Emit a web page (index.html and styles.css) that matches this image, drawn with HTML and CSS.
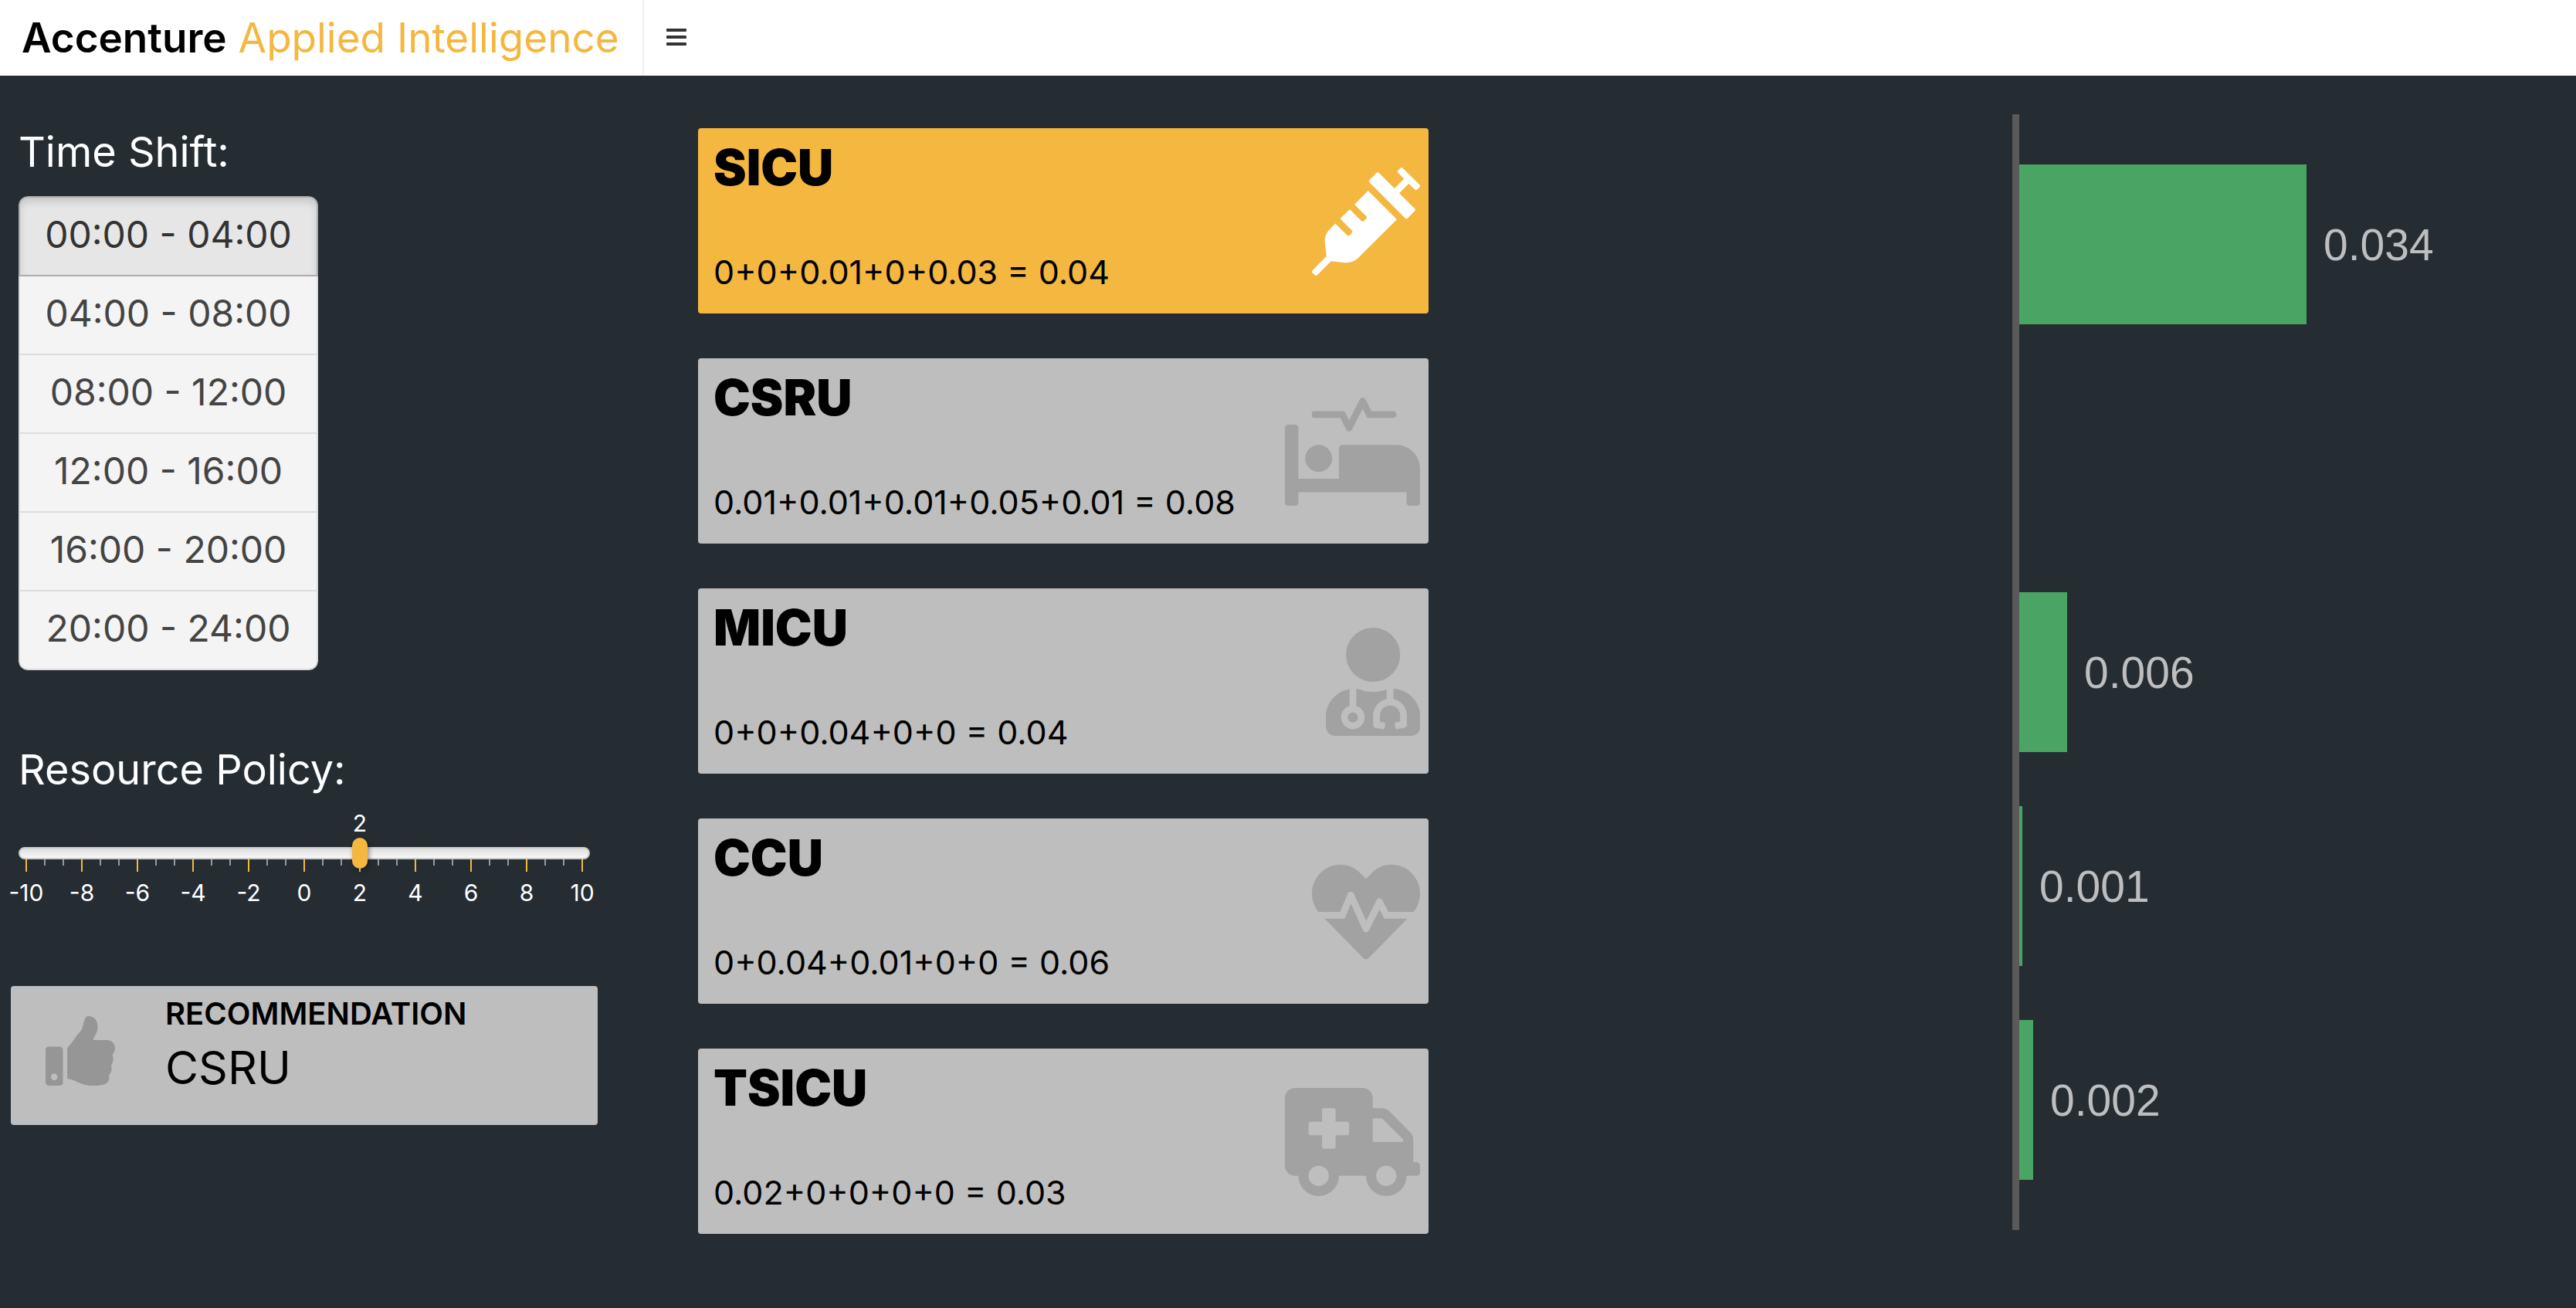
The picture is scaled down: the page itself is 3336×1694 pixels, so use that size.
FILE: index.html
```html
<!DOCTYPE html>
<html lang="en">
<head>
<meta charset="utf-8">
<title>Accenture Applied Intelligence</title>
<link rel="stylesheet" href="styles.css">
</head>
<body>
<header class="topbar">
  <a class="brand" href="#"><strong>Accenture</strong> Applied Intelligence</a>
  <button class="menu" type="button" aria-label="Toggle menu"><span></span><span></span><span></span></button>
</header>
<main class="dashboard">
  <section class="sidebar">
    <fieldset class="shifts">
      <legend class="heading">Time Shift:</legend>
      <div class="shift-list">
        <label class="shift"><input type="radio" name="shift" checked>00:00 - 04:00</label>
        <label class="shift"><input type="radio" name="shift">04:00 - 08:00</label>
        <label class="shift"><input type="radio" name="shift">08:00 - 12:00</label>
        <label class="shift"><input type="radio" name="shift">12:00 - 16:00</label>
        <label class="shift"><input type="radio" name="shift">16:00 - 20:00</label>
        <label class="shift"><input type="radio" name="shift">20:00 - 24:00</label>
      </div>
    </fieldset>
    <div class="policy">
      <label class="heading" for="policy">Resource Policy:</label>
      <div class="scale value"><output class="mark" for="policy" style="margin-left:60%">2</output></div>
      <input class="slider" id="policy" type="range" min="-10" max="10" value="2">
      <div class="scale ticks">
        <i></i><i></i><i></i><i></i><i></i><i></i><i></i><i></i><i></i><i></i><i></i><i></i><i></i><i></i><i></i><i></i><i></i><i></i><i></i><i></i><i></i><i></i><i></i><i></i><i></i><i></i><i></i><i></i><i></i><i></i><i></i>
      </div>
      <div class="scale labels">
        <span class="mark">-10</span><span class="mark">-8</span><span class="mark">-6</span><span class="mark">-4</span><span class="mark">-2</span><span class="mark">0</span><span class="mark">2</span><span class="mark">4</span><span class="mark">6</span><span class="mark">8</span><span class="mark">10</span>
      </div>
    </div>
    <div class="recommendation">
      <svg class="thumb" viewBox="0 0 512 512" aria-hidden="true"><path d="M104 224H24c-13.255 0-24 10.745-24 24v240c0 13.255 10.745 24 24 24h80c13.255 0 24-10.745 24-24V248c0-13.255-10.745-24-24-24zM64 472c-13.255 0-24-10.745-24-24s10.745-24 24-24 24 10.745 24 24-10.745 24-24 24zM384 81.452c0 42.416-25.97 66.208-33.277 94.548h101.723c33.397 0 59.397 27.746 59.553 58.098.084 17.938-7.546 37.249-19.439 49.197l-.11.11c9.836 23.337 8.237 56.037-9.308 79.469 8.681 25.895-.069 57.704-16.382 74.757 4.298 17.598 2.244 32.575-6.148 44.632C440.202 511.587 389.616 512 346.839 512l-2.845-.001c-48.287-.017-87.806-17.598-119.56-31.725-15.957-7.099-36.821-15.887-52.651-16.178-6.54-.12-11.783-5.457-11.783-11.998v-213.77c0-3.2 1.282-6.271 3.558-8.521 39.614-39.144 56.648-80.587 89.117-113.111 14.804-14.832 20.188-37.236 25.393-58.902C282.515 39.293 291.817 0 312 0c24 0 72 8 72 81.452z"/></svg>
      <div>
        <h2 class="rec-title">RECOMMENDATION</h2>
        <p class="rec-unit">CSRU</p>
      </div>
    </div>
  </section>

  <section class="units">
    <article class="unit selected">
      <div class="unit-text"><h2>SICU</h2><p>0+0+0.01+0+0.03 = 0.04</p></div>
      <svg class="icon" viewBox="0 0 512 512" aria-hidden="true"><path d="M201.500 174.800l55.700 55.800c3.100 3.100 3.100 8.200 0 11.300l-11.300 11.300c-3.100 3.100-8.200 3.100-11.300 0l-55.700-55.800-45.300 45.300 55.800 55.800c3.100 3.100 3.100 8.200 0 11.300l-11.300 11.300c-3.100 3.100-8.200 3.100-11.300 0L111 265.200l-26.400 26.400c-17.300 17.300-25.600 41.100-23 65.400l7.100 63.600L2.300 487c-3.100 3.100-3.100 8.200 0 11.300l11.300 11.300c3.100 3.100 8.200 3.100 11.300 0l66.300-66.300 63.600 7.100c23.900 2.600 47.900-5.400 65.400-23l181.900-181.900-135.700-135.700-64.900 65zm308.200-93.300L430.500 2.300c-3.100-3.100-8.200-3.100-11.300 0l-11.300 11.300c-3.100 3.100-3.100 8.200 0 11.300l28.300 28.300-45.300 45.300-56.600-56.600-17-17c-3.100-3.100-8.200-3.100-11.300 0l-33.900 33.900c-3.100 3.100-3.100 8.200 0 11.300l17 17L424.800 223l17 17c3.100 3.100 8.200 3.100 11.300 0l33.900-34c3.100-3.100 3.100-8.200 0-11.300l-73.500-73.500 45.300-45.300 28.300 28.300c3.100 3.100 8.200 3.100 11.300 0l11.300-11.300c3.100-3.200 3.100-8.200 0-11.400z"/></svg>
    </article>
    <article class="unit">
      <div class="unit-text"><h2>CSRU</h2><p>0.01+0.01+0.01+0.05+0.01 = 0.08</p></div>
      <svg class="icon" viewBox="0 0 640 512" aria-hidden="true"><path d="M528 224H272c-8.800 0-16 7.200-16 16v144H64V144c0-8.800-7.200-16-16-16H16c-8.800 0-16 7.200-16 16v352c0 8.800 7.200 16 16 16h32c8.800 0 16-7.200 16-16v-48h512v48c0 8.800 7.200 16 16 16h32c8.800 0 16-7.200 16-16V336c0-61.900-50.100-112-112-112zM136 96h126.100l27.600 55.200c5.900 11.800 22.700 11.800 28.600 0L368 51.800 390.100 96H512c8.800 0 16-7.200 16-16s-7.200-16-16-16H409.900L382.300 8.800C376.400-3 359.600-3 353.700 8.800L304 108.200l-19.900-39.800c-1.400-2.700-4.100-4.400-7.200-4.400H136c-4.400 0-8 3.600-8 8v16c0 4.400 3.600 8 8 8zm24 256c35.300 0 64-28.700 64-64s-28.700-64-64-64-64 28.700-64 64 28.700 64 64 64z"/></svg>
    </article>
    <article class="unit">
      <div class="unit-text"><h2>MICU</h2><p>0+0+0.04+0+0 = 0.04</p></div>
      <svg class="icon" viewBox="0 0 448 512" aria-hidden="true"><path d="M224 256c70.700 0 128-57.300 128-128S294.700 0 224 0 96 57.300 96 128s57.300 128 128 128zM104 424c0 13.300 10.700 24 24 24s24-10.700 24-24-10.700-24-24-24-24 10.700-24 24zm216-135.400v49c36.500 7.400 64 39.800 64 78.400v41.700c0 7.600-5.400 14.200-12.900 15.700l-32.200 6.400c-4.300.9-8.500-1.900-9.400-6.300l-3.100-15.700c-.9-4.300 1.900-8.600 6.300-9.400l19.300-3.900V416c0-62.800-96-65.100-96 1.900v26.700l19.300 3.900c4.300.9 7.100 5.100 6.300 9.400l-3.100 15.700c-.9 4.300-5.100 7.100-9.400 6.300l-31.200-4.200c-7.900-1.100-13.800-7.800-13.800-15.900V416c0-38.600 27.500-70.900 64-78.400v-45.200c-2.200.7-4.400 1.100-6.600 1.900-18 6.300-37.300 9.800-57.400 9.800s-39.400-3.500-57.400-9.800c-7.400-2.600-14.900-4.200-22.600-5.200v81.600c23.100 6.900 40 28.100 40 53.400 0 30.900-25.100 56-56 56s-56-25.100-56-56c0-25.300 16.900-46.500 40-53.400v-80.400C48.500 301 0 355.800 0 422.400v44.800C0 491.900 20.100 512 44.800 512h358.400c24.700 0 44.800-20.100 44.800-44.800v-44.800c0-72-56.800-130.300-128-133.800z"/></svg>
    </article>
    <article class="unit">
      <div class="unit-text"><h2>CCU</h2><p>0+0.04+0.01+0+0 = 0.06</p></div>
      <svg class="icon" viewBox="0 0 512 512" aria-hidden="true"><path d="M320.200 243.800l-49.700 99.400c-6 12.100-23.400 11.700-28.900-.6l-56.900-126.300-30 71.700H60.600l182.500 186.500c7.100 7.300 18.600 7.300 25.700 0L451.400 288H342.300l-22.100-44.200zM473.700 73.900l-2.400-2.500c-51.500-52.600-135.800-52.600-187.400 0L256 100l-27.900-28.500c-51.500-52.700-135.900-52.700-187.400 0l-2.400 2.400C-10.400 123.700-12.500 203 31 256h102.400l35.900-86.200c5.400-12.900 23.600-13.100 29.200-.4l58.200 129.300 49-97.900c5.900-11.800 22.700-11.800 28.600 0l27.600 55.200H481c43.500-53 41.400-132.300-7.300-182.100z"/></svg>
    </article>
    <article class="unit">
      <div class="unit-text"><h2>TSICU</h2><p>0.02+0+0+0+0 = 0.03</p></div>
      <svg class="icon" viewBox="0 0 640 512" aria-hidden="true"><path d="M624 352h-16V243.900c0-12.700-5.100-24.900-14.100-33.900L494 110.100c-9-9-21.200-14.100-33.900-14.100H416V48c0-26.500-21.500-48-48-48H48C21.500 0 0 21.500 0 48v320c0 26.500 21.500 48 48 48h16c0 53 43 96 96 96s96-43 96-96h128c0 53 43 96 96 96s96-43 96-96h48c8.800 0 16-7.200 16-16v-32c0-8.800-7.200-16-16-16zM160 464c-26.500 0-48-21.500-48-48s21.500-48 48-48 48 21.500 48 48-21.500 48-48 48zm144-248c0 4.400-3.600 8-8 8h-56v56c0 4.400-3.600 8-8 8h-48c-4.400 0-8-3.600-8-8v-56h-56c-4.400 0-8-3.600-8-8v-48c0-4.400 3.600-8 8-8h56v-56c0-4.400 3.600-8 8-8h48c4.400 0 8 3.600 8 8v56h56c4.400 0 8 3.600 8 8v48zm176 248c-26.500 0-48-21.500-48-48s21.500-48 48-48 48 21.500 48 48-21.500 48-48 48zm80-208H416V144h44.100l99.900 99.900V256z"/></svg>
    </article>
  </section>

  <section class="chart" aria-label="Score by unit">
    <div class="row"><div class="bar" style="width:51.6%"></div><span>0.034</span></div>
    <div class="row"></div>
    <div class="row"><div class="bar" style="width:8.6%"></div><span>0.006</span></div>
    <div class="row"><div class="bar" style="width:0.56%"></div><span>0.001</span></div>
    <div class="row"><div class="bar" style="width:2.5%"></div><span>0.002</span></div>
  </section>
</main>
</body>
</html>
```
FILE: styles.css
```css
* { box-sizing: border-box; }

body {
  margin: 0;
  min-height: 100vh;
  background: #252d33;
  color: #fff;
  font-family: Inter, "Liberation Sans", sans-serif;
}

h2, p { margin: 0; }

/* Header */
.topbar {
  display: flex;
  height: 98px;
  background: #fff;
}

.brand {
  width: 25%;
  padding-left: 28px;
  border-right: 2px solid #eee;
  color: #f4b740;
  font-size: 53px;
  line-height: 98px;
  white-space: nowrap;
  text-decoration: none;
}

.brand strong { color: #000; font-weight: 600; }

.menu {
  display: flex;
  flex-direction: column;
  justify-content: center;
  gap: 5px;
  padding: 0 29px 2px;
  border: 0;
  background: none;
}

.menu span { width: 26px; height: 4px; border-radius: 1px; background: #333; }

/* Page columns */
.dashboard {
  display: grid;
  grid-template-columns: 904fr 946fr 756fr 730fr;
  align-items: start;
}

.sidebar { padding: 65px 130px 0 14px; }

.heading {
  display: block;
  padding: 0;
  font-size: 54px;
  line-height: 68px;
}

/* Time shift picker */
.shifts { margin: 0; padding: 0 10px; border: 0; }

.shift-list {
  display: flex;
  flex-direction: column;
  width: 388px;
  margin-top: 23px;
  border-radius: 12px;
  overflow: hidden;
}

.shift {
  height: 102px;
  border: 2px solid #dcdcdc;
  border-top: 0;
  background: #f4f4f4;
  color: #444;
  font-size: 48px;
  line-height: 96px;
  text-align: center;
}

.shift:has(input:checked) {
  height: 104px;
  border: 2px solid #adadad;
  border-radius: 12px 12px 0 0;
  background: #e6e6e6;
  box-shadow: inset 0 6px 10px rgba(0, 0, 0, .125);
  color: #333;
}

.shift:last-child { border-radius: 0 0 12px 12px; }

.shift input {
  position: absolute;
  margin: 0;
  opacity: 0;
}

/* Policy slider */
.policy { margin-top: 95px; padding: 0 10px; }

.scale {
  display: flex;
  justify-content: space-between;
  margin: 0 9px;
  font-size: 30px;
  line-height: 36px;
}

.value { margin-top: 17px; padding-right: 2px; justify-content: flex-start; }

.mark {
  display: flex;
  justify-content: center;
  width: 2px;
  white-space: nowrap;
}

.slider {
  display: block;
  width: 100%;
  height: 40px;
  margin: 1px 0 0;
  appearance: none;
  background: none;
}

.slider::-webkit-slider-runnable-track {
  height: 16px;
  border: 2px solid #ccc;
  border-radius: 8px;
  background: linear-gradient(#dedede, #f8f8f8);
}

.slider::-webkit-slider-thumb {
  width: 20px;
  height: 40px;
  margin-top: -14px;
  appearance: none;
  border-radius: 10px;
  background: #f4b740;
  box-shadow: 2px 2px 6px rgba(0, 0, 0, .4);
}

.ticks { height: 16px; margin-top: -12px; }
.ticks i { width: 2px; height: 8px; background: #999; }
.ticks i:nth-child(3n + 1) { height: 16px; background: #f4b740; }
.labels { margin-top: 9px; }

/* Recommendation */
.recommendation {
  display: flex;
  gap: 65px;
  height: 180px;
  margin-top: 103px;
  padding: 11px 45px;
  border-radius: 4px;
  background: #bebebe;
  color: #000;
}

.thumb { width: 90px; height: 90px; margin-top: 28px; fill: #969696; }
.rec-title { font-size: 40px; font-weight: 600; line-height: 50px; }
.rec-unit { font-size: 59px; line-height: 90px; }

/* Unit cards */
.units {
  display: flex;
  flex-direction: column;
  gap: 58px;
  padding-top: 68px;
}

.unit {
  display: flex;
  justify-content: space-between;
  height: 240px;
  padding: 10px 11px 10px 20px;
  border-radius: 4px;
  background: #bebebe;
  color: #000;
}

.unit.selected { background: #f4b740; }
.unit h2 { font-size: 64px; font-weight: 900; line-height: 82px; }
.unit p { margin-top: 66px; font-size: 43px; line-height: 56px; }
.icon { height: 140px; margin-top: 41px; fill: #a2a2a2; }
.selected .icon { fill: #fff; }

/* Bar chart */
.chart {
  grid-column: 4;
  margin-top: 50px;
  padding: 30px 0;
  border-left: 9px solid #5a5a5a;
  font-family: "Liberation Sans", Arial, sans-serif;
  font-size: 57px;
  color: #bebebe;
}

.row {
  display: flex;
  align-items: center;
  gap: 22px;
  height: 277px;
}

.bar { flex: none; height: 207px; background: #4aa564; }
```
